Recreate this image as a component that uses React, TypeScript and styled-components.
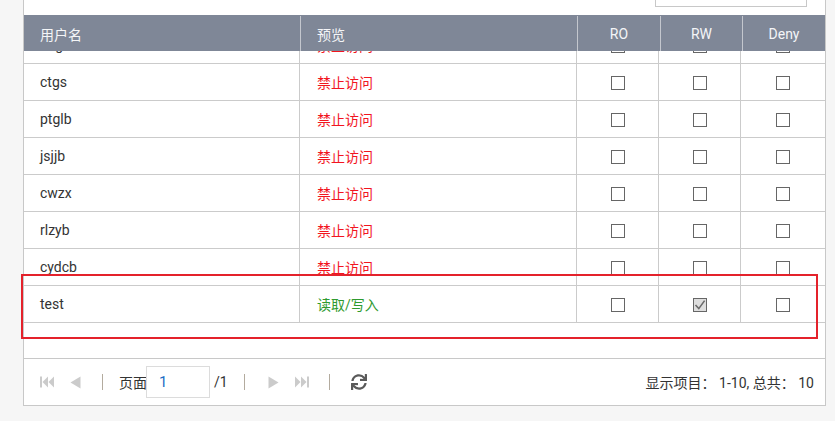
import React, { useLayoutEffect, useRef } from "react";
import styled, { createGlobalStyle } from "styled-components";
import { FaSync } from "react-icons/fa";

const GlobalStyle = createGlobalStyle`
  html, body { margin: 0; padding: 0; background: #f6f6f6; }
  body { font-family: Roboto, "Noto Sans CJK SC", sans-serif; }
  * { box-sizing: border-box; }
`;

const Page = styled.div`
  position: relative;
  width: 835px;
  height: 421px;
  background: #f6f6f6;
  padding-left: 23px;
  overflow: hidden;
`;

const Panel = styled.div`
  width: 803px;
  background: #fff;
  border: 1px solid #c8c8c8;
  border-top: none;
  display: flex;
  flex-direction: column;
`;

const Toolbar = styled.div`
  height: 15px;
  overflow: hidden;
  display: flex;
  justify-content: flex-end;
  align-items: flex-end;
  padding: 0 18px 8px 0;
`;

const SearchBox = styled.div`
  width: 152px;
  height: 28px;
  flex-shrink: 0;
  border: 1px solid #c8c8c8;
  background: #fff;
`;

const HeaderRow = styled.div`
  display: grid;
  grid-template-columns: 277px 277px 83px 82px 82px;
  height: 36px;
  background: #7f8797;
`;

const HeaderCell = styled.div<{ $center?: boolean; $last?: boolean }>`
  display: flex;
  align-items: center;
  justify-content: ${(p) => (p.$center ? "center" : "flex-start")};
  padding-left: ${(p) => (p.$center ? "0" : "16px")};
  color: #f4f5f7;
  font-size: 14px;
  border-right: ${(p) => (p.$last ? "none" : "1px solid #c4c7ce")};
  margin-top: 1px;
`;

const Body = styled.div`
  height: 307px;
  overflow: hidden;
`;

const Row = styled.div`
  display: grid;
  grid-template-columns: 276px 277px 82px 82px 84px;
  height: 37px;
  border-bottom: 1px solid #cbcbcb;
`;

const Cell = styled.div<{ $center?: boolean; $last?: boolean }>`
  display: flex;
  align-items: center;
  justify-content: ${(p) => (p.$center ? "center" : "flex-start")};
  padding-left: ${(p) => (p.$center ? "0" : "16px")};
  border-right: ${(p) => (p.$last ? "none" : "1px solid #cbcbcb")};
  font-size: 14px;
  color: #333;
`;

const Access = styled.span<{ $ok?: boolean }>`
  font-size: 14px;
  color: ${(p) => (p.$ok ? "#2f9a2f" : "#f2151f")};
  padding-left: 1px;
`;

const Check = styled.span<{ $checked?: boolean }>`
  width: 14px;
  height: 14px;
  border: 1px solid #666;
  background: ${(p) => (p.$checked ? "#dedede" : "#fff")};
  display: inline-flex;
  align-items: center;
  justify-content: center;
  margin-top: 1px;
`;

const BottomSpace = styled.div`
  height: 35px;
`;

const Footer = styled.div`
  height: 47px;
  border-top: 1px solid #c8c8c8;
  display: flex;
  align-items: center;
  padding: 0 11px 0 16px;
  font-size: 14px;
  color: #333;
`;

const Item = styled.span<{ $ml: number }>`
  display: inline-flex;
  align-items: center;
  margin-left: ${(p) => p.$ml}px;
  flex-shrink: 0;
`;

const Sep = styled.span<{ $ml: number }>`
  width: 1px;
  height: 16px;
  background: #b3ab9e;
  margin-left: ${(p) => p.$ml}px;
  flex-shrink: 0;
`;

const PageInput = styled.div`
  width: 64px;
  height: 32px;
  border: 1px solid #dcdcdc;
  display: flex;
  align-items: center;
  padding-left: 12px;
  color: #1b6ec6;
  font-size: 15px;
  margin-left: -1px;
`;

const Info = styled.span`
  margin-left: auto;
  font-size: 14px;
  color: #333;
  white-space: pre;
`;

const Highlight = styled.div`
  position: absolute;
  left: 21px;
  top: 274px;
  width: 797px;
  height: 65px;
  border: 2px solid #e4222b;
  pointer-events: none;
`;

const ICON = "#cbcbcb";

const FirstIcon = () => (
  <svg width="15" height="12" viewBox="0 0 15 12">
    <rect x="0" y="0.5" width="2" height="11" fill={ICON} />
    <polygon points="8,0.5 2.5,6 8,11.5" fill={ICON} />
    <polygon points="14,0.5 8.5,6 14,11.5" fill={ICON} />
  </svg>
);

const LastIcon = () => (
  <svg width="15" height="12" viewBox="0 0 15 12">
    <polygon points="1,0.5 6.5,6 1,11.5" fill={ICON} />
    <polygon points="7,0.5 12.5,6 7,11.5" fill={ICON} />
    <rect x="13" y="0.5" width="2" height="11" fill={ICON} />
  </svg>
);

const PrevIcon = () => (
  <svg width="11" height="13" viewBox="0 0 11 13">
    <polygon points="10.5,0.5 0.5,6.5 10.5,12.5" fill={ICON} />
  </svg>
);

const NextIcon = () => (
  <svg width="11" height="13" viewBox="0 0 11 13">
    <polygon points="0.5,0.5 10.5,6.5 0.5,12.5" fill={ICON} />
  </svg>
);

const CheckMark = () => (
  <svg width="12" height="12" viewBox="0 0 12 12">
    <path d="M1.5 6 L4.8 9.6 L10.6 1.6" stroke="#6a6a6a" strokeWidth="1.6" fill="none" />
  </svg>
);

type Perm = { name: string; ok: boolean; rw?: boolean };

const rows: Perm[] = [
  { name: "admin", ok: false },
  { name: "guest", ok: false },
  { name: "dcgs", ok: false },
  { name: "ctgs", ok: false },
  { name: "ptglb", ok: false },
  { name: "jsjjb", ok: false },
  { name: "cwzx", ok: false },
  { name: "rlzyb", ok: false },
  { name: "cydcb", ok: false },
  { name: "test", ok: true, rw: true },
];

export default function App() {
  const bodyRef = useRef<HTMLDivElement>(null);

  useLayoutEffect(() => {
    const el = bodyRef.current;
    if (el) el.scrollTop = el.scrollHeight - el.clientHeight;
  }, []);

  return (
    <>
      <GlobalStyle />
      <Page>
        <Panel>
          <Toolbar>
            <SearchBox />
          </Toolbar>
          <HeaderRow>
            <HeaderCell>用户名</HeaderCell>
            <HeaderCell>预览</HeaderCell>
            <HeaderCell $center>RO</HeaderCell>
            <HeaderCell $center>RW</HeaderCell>
            <HeaderCell $center $last>
              Deny
            </HeaderCell>
          </HeaderRow>
          <Body ref={bodyRef}>
            {rows.map((r) => (
              <Row key={r.name}>
                <Cell>{r.name}</Cell>
                <Cell>
                  <Access $ok={r.ok}>{r.ok ? "读取/写入" : "禁止访问"}</Access>
                </Cell>
                <Cell $center>
                  <Check />
                </Cell>
                <Cell $center>
                  <Check $checked={r.rw}>{r.rw && <CheckMark />}</Check>
                </Cell>
                <Cell $center $last>
                  <Check />
                </Cell>
              </Row>
            ))}
            <BottomSpace />
          </Body>
          <Footer>
            <Item $ml={0}>
              <FirstIcon />
            </Item>
            <Item $ml={15}>
              <PrevIcon />
            </Item>
            <Sep $ml={21} />
            <Item $ml={16}>页面</Item>
            <PageInput>1</PageInput>
            <Item $ml={4}>/1</Item>
            <Sep $ml={16} />
            <Item $ml={23}>
              <NextIcon />
            </Item>
            <Item $ml={15}>
              <LastIcon />
            </Item>
            <Sep $ml={20} />
            <Item $ml={21}>
              <FaSync size={16} color="#5a5a5a" />
            </Item>
            <Info>显示项目： 1-10, 总共： 10</Info>
          </Footer>
        </Panel>
        <Highlight />
      </Page>
    </>
  );
}
